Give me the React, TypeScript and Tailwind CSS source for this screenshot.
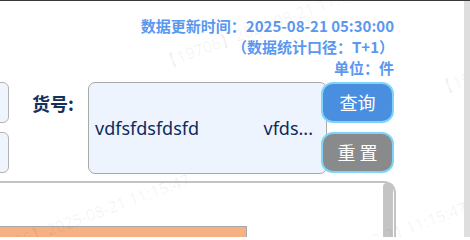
const marks = [
  { left: 162, top: 50 },
  { left: 438, top: 76 },
  { left: -26, top: 244 },
  { left: 251, top: 272 },
]

function Watermarks() {
  return (
    <>
      {marks.map((m, i) => (
        <span
          key={i}
          className="pointer-events-none absolute z-20 origin-[0_50%] -rotate-[20deg] whitespace-nowrap text-[16px] leading-[24px] text-black/[0.06] font-['Noto_Sans',sans-serif]"
          style={{ left: m.left, top: m.top }}
        >
          【19706】2025-08-21 11:15:47
        </span>
      ))}
    </>
  )
}

export default function App() {
  return (
    <div className="flex h-[237px] w-[470px] overflow-hidden border-t border-[#3a3a3a] bg-white font-['Noto_Sans_CJK_SC','Noto_Sans',sans-serif]">
      <div className="relative flex-1 overflow-hidden pr-[70px]">
        <div className="pt-[14px] text-right text-[15px] font-bold leading-[21px] text-[#5a98f0]">
          <p>数据更新时间：2025-08-21 05:30:00</p>
          <p>（数据统计口径：T+1）</p>
          <p>单位：件</p>
        </div>

        <div className="mt-[4px] -ml-[100px] flex items-start">
          <div className="flex w-[109px] shrink-0 flex-col gap-[9px]">
            <div className="h-[41px] rounded-[6px] border border-[#b3b3b3] bg-[#eef5fd]" />
            <div className="h-[41px] rounded-[6px] border border-[#b3b3b3] bg-[#eef5fd]" />
          </div>
          <label className="ml-[23px] w-[56px] shrink-0 pt-[9px] text-[18px] font-bold leading-[24px] text-[#15305a]">货号:</label>
          <div className="flex h-[92px] w-[239px] shrink-0 items-center justify-between rounded-[7px] border border-[#a9a9a9] bg-[#edf4fd] pl-[6px] pr-[13px] font-['Noto_Sans',sans-serif] text-[18px] text-[#0d2b5c]">
            <span>vdfsfdsfdsfd</span>
            <span>vfds...</span>
          </div>
          <div className="relative z-10 -ml-[6px] flex w-[73px] shrink-0 flex-col gap-[9px]">
            <button className="h-[41px] rounded-[12px] border-2 border-[#7fd5f8] bg-[#4a8fdf] text-[18px] text-white">查询</button>
            <button className="h-[41px] rounded-[12px] border-2 border-[#7fd5f8] bg-[#898a8b] text-[18px] text-white">重 置</button>
          </div>
        </div>

        <div className="mt-[7px] -ml-[20px] -mr-[2px] flex h-[60px] rounded-tr-[12px] border-2 border-b-0 border-[#c3c3c3]">
          <div className="flex-1 pt-[43px]">
            <div className="h-[20px] w-[265px] border-t border-r border-[#a8a8a8] bg-[#f5b183]" />
          </div>
          <div className="mr-[1px] w-[10px] rounded-t-[4px] bg-[#c4c4c4]" />
        </div>

        <Watermarks />
      </div>
      <div className="w-[6px] shrink-0 bg-[#dedede]" />
    </div>
  )
}
